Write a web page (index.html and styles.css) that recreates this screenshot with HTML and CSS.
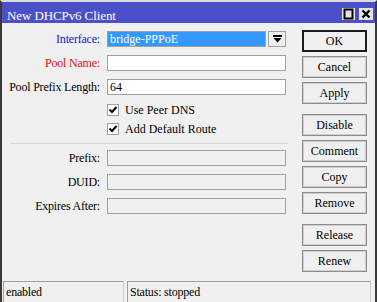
FILE: index.html
```html
<!DOCTYPE html>
<html>
<head>
<meta charset="utf-8">
<link rel="stylesheet" href="styles.css">
</head>
<body>
<div class="window">
  <div class="titlebar">
    <span class="title">New DHCPv6 Client</span>
    <span class="tbtn"><svg width="13" height="12" viewBox="0 0 13 12"><rect x="2.5" y="1.5" width="8" height="9" fill="none" stroke="#000" stroke-width="2"/></svg></span>
    <span class="tbtn close"><svg width="14" height="12" viewBox="0 0 14 12"><path d="M3.5 2.5 L10.5 9.5 M10.5 2.5 L3.5 9.5" stroke="#000" stroke-width="2.4"/></svg></span>
  </div>
  <div class="main">
    <div class="form">
      <div class="row">
        <label class="lbl blue">Interface:</label>
        <div class="combo">
          <div class="field sel">bridge-PPPoE</div>
          <div class="ddbtn"><svg width="9" height="8" viewBox="0 0 9 8"><rect x="0" y="0" width="9" height="2" fill="#000"/><path d="M0.5 3 L8.5 3 L4.5 7.5 Z" fill="#000"/></svg></div>
        </div>
      </div>
      <div class="row">
        <label class="lbl red">Pool Name:</label>
        <div class="field"></div>
      </div>
      <div class="row">
        <label class="lbl">Pool Prefix Length:</label>
        <div class="field">64</div>
      </div>
      <div class="checks">
        <div class="chk"><span class="box"><svg width="10" height="10" viewBox="0 0 10 10"><path d="M1.5 4.5 L4 7 L8.5 2" fill="none" stroke="#000" stroke-width="2"/></svg></span>Use Peer DNS</div>
        <div class="chk"><span class="box"><svg width="10" height="10" viewBox="0 0 10 10"><path d="M1.5 4.5 L4 7 L8.5 2" fill="none" stroke="#000" stroke-width="2"/></svg></span>Add Default Route</div>
      </div>
      <div class="sep"></div>
      <div class="row">
        <label class="lbl">Prefix:</label>
        <div class="field ro"></div>
      </div>
      <div class="row">
        <label class="lbl">DUID:</label>
        <div class="field ro"></div>
      </div>
      <div class="row">
        <label class="lbl">Expires After:</label>
        <div class="field ro"></div>
      </div>
    </div>
    <div class="buttons">
      <div class="btn default">OK</div>
      <div class="btn">Cancel</div>
      <div class="btn">Apply</div>
      <div class="btn grp">Disable</div>
      <div class="btn">Comment</div>
      <div class="btn">Copy</div>
      <div class="btn">Remove</div>
      <div class="btn grp">Release</div>
      <div class="btn">Renew</div>
    </div>
  </div>
  <div class="statusbar">
    <div class="pane p1">enabled</div>
    <div class="pane p2">Status: stopped</div>
  </div>
</div>
</body>
</html>
```
FILE: styles.css
```css
* { box-sizing: border-box; }
html, body { margin: 0; padding: 0; }
body {
  font-family: "Liberation Serif", "Times New Roman", serif;
  font-size: 12px;
  color: #000;
  background: #f0f0f0;
}
.window {
  width: 377px;
  height: 302px;
  border-top: 2px solid #dcdcdc;
  border-left: 2px solid #3a3a3a;
  border-right: 2px solid #3a3a3a;
  background: #f0f0f0;
  display: flex;
  flex-direction: column;
}
.titlebar {
  height: 21px;
  background: #4b50c9;
  color: #fff;
  display: flex;
  align-items: flex-start;
  padding-left: 5px;
  padding-right: 2px;
}
.title {
  flex: 1;
  font-size: 13px;
  line-height: 13px;
  margin-top: 7px;
  letter-spacing: -0.1px;
}
.tbtn {
  width: 13px;
  height: 12px;
  margin-top: 6px;
  background: #e4e4e4;
  display: flex;
}
.tbtn.close {
  width: 14px;
  margin-left: 4px;
}
.main {
  flex: 1;
  display: flex;
}
.form {
  width: 286px;
  padding-top: 8px;
  display: flex;
  flex-direction: column;
}
.row {
  display: flex;
  align-items: center;
  height: 16px;
  margin-bottom: 8px;
}
.lbl {
  width: 98px;
  text-align: right;
  margin-right: 7px;
  white-space: nowrap;
  letter-spacing: -0.2px;
}
.blue { color: #1414d8; }
.red { color: #e01010; }
.field {
  width: 179px;
  height: 16px;
  border: 1px solid #a0a0a0;
  background: #fff;
  padding-left: 2px;
  line-height: 14px;
}
.field.ro {
  background: #f0f0f0;
}
.combo {
  display: flex;
  gap: 2px;
}
.field.sel {
  width: 159px;
  background: #3399ff;
  color: #fff;
  border-color: #a0a0a0;
}
.ddbtn {
  width: 18px;
  height: 16px;
  border: 1px solid #a0a0a0;
  display: flex;
  align-items: center;
  justify-content: center;
}
.checks {
  padding-left: 105px;
  margin-top: 1px;
  display: flex;
  flex-direction: column;
  gap: 7px;
}
.chk {
  display: flex;
  align-items: center;
  height: 12px;
}
.box {
  width: 12px;
  height: 12px;
  border: 1px solid #a0a0a0;
  background: #fff;
  display: flex;
  align-items: center;
  justify-content: center;
  margin-right: 6px;
}
.sep {
  margin: 8px 0 6px 8px;
  height: 1px;
  background: #d8d8d8;
}
.buttons {
  margin-left: 14px;
  padding-top: 7px;
  display: flex;
  flex-direction: column;
  gap: 4px;
}
.btn {
  width: 65px;
  height: 22px;
  border: 1px solid #8c8c8c;
  box-shadow: inset 0 0 0 1px #d0d0d0;
  background: #f0f0f0;
  display: flex;
  align-items: center;
  justify-content: center;
}
.btn.default {
  border: 2px solid #1a1a1a;
  box-shadow: none;
}
.btn.grp {
  margin-top: 6px;
}
.statusbar {
  height: 21px;
  display: flex;
  padding-left: 1px;
  gap: 3px;
}
.pane {
  height: 21px;
  border-top: 1px solid #a0a0a0;
  border-left: 1px solid #a0a0a0;
  border-right: 1px solid #d0d0d0;
  padding-left: 2px;
  padding-top: 3px;
  line-height: 14px;
  letter-spacing: -0.2px;
}
.p1 { width: 121px; }
.p2 { width: 244px; }
```
